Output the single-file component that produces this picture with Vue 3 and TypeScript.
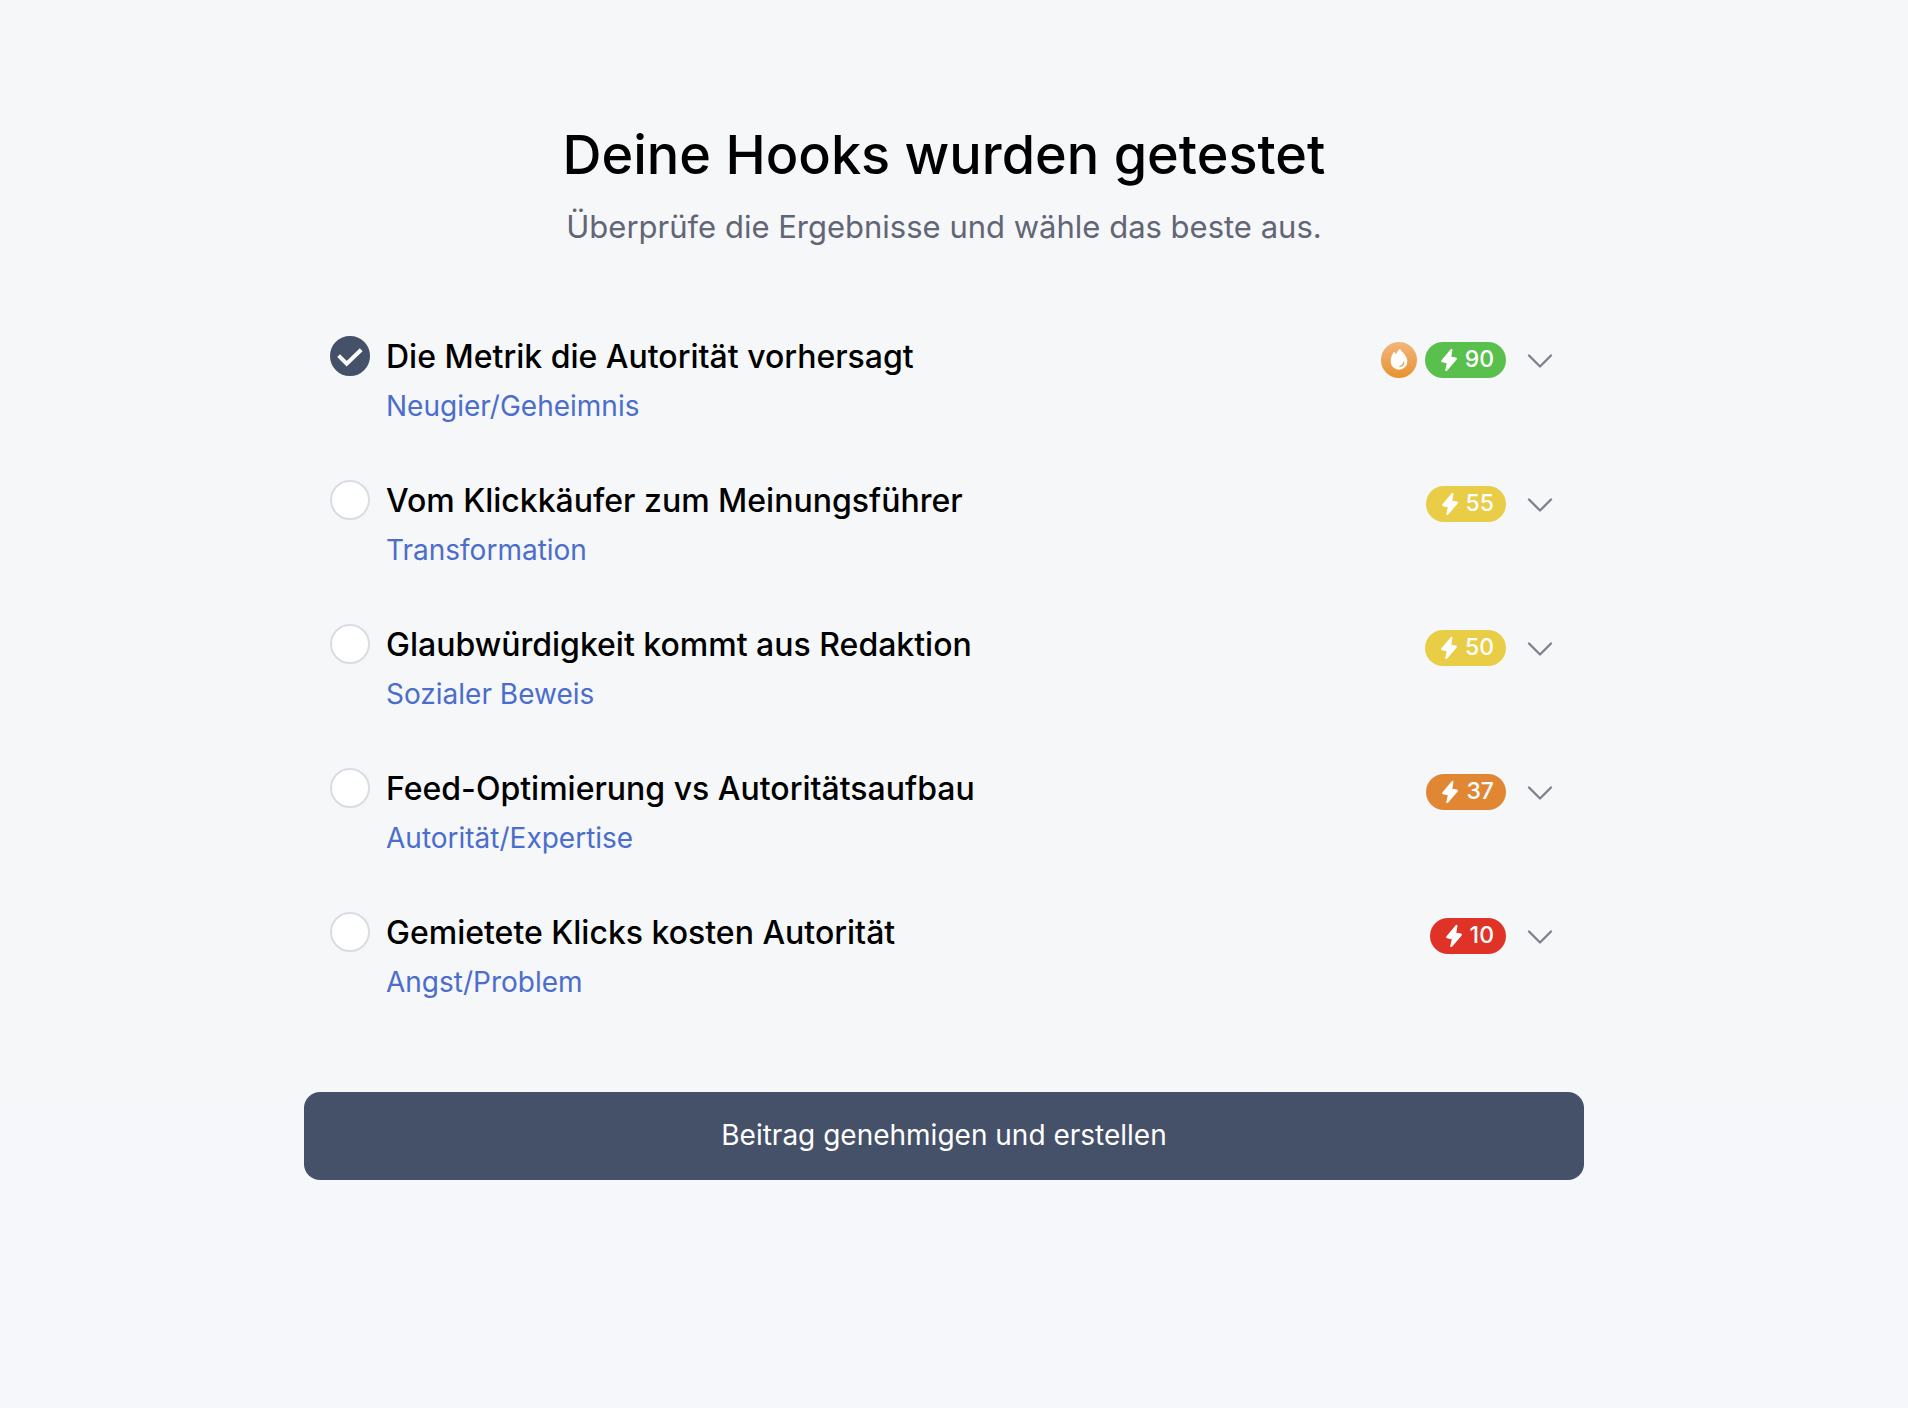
<script setup lang="ts">
import { ref } from 'vue'

interface Hook {
  id: number
  title: string
  category: string
  score: number
  top?: boolean
}

const hooks: Hook[] = [
  { id: 1, title: 'Die Metrik die Autorität vorhersagt', category: 'Neugier/Geheimnis', score: 90, top: true },
  { id: 2, title: 'Vom Klickkäufer zum Meinungsführer', category: 'Transformation', score: 55 },
  { id: 3, title: 'Glaubwürdigkeit kommt aus Redaktion', category: 'Sozialer Beweis', score: 50 },
  { id: 4, title: 'Feed-Optimierung vs Autoritätsaufbau', category: 'Autorität/Expertise', score: 37 },
  { id: 5, title: 'Gemietete Klicks kosten Autorität', category: 'Angst/Problem', score: 10 },
]

const selected = ref(1)

function level(score: number): string {
  if (score >= 75) return 'great'
  if (score >= 50) return 'medium'
  if (score >= 25) return 'low'
  return 'poor'
}
</script>

<template>
  <main class="page">
    <form class="content" @submit.prevent>
      <header class="intro">
        <h1>Deine Hooks wurden getestet</h1>
        <p>Überprüfe die Ergebnisse und wähle das beste aus.</p>
      </header>

      <ul class="hooks">
        <li v-for="hook in hooks" :key="hook.id" class="hook">
          <label class="choice">
            <span class="radio">
              <input v-model="selected" type="radio" name="hook" :value="hook.id" />
              <svg v-if="selected === hook.id" viewBox="0 0 40 40" aria-hidden="true">
                <path d="M8.6 19.6L16.7 27.6L31.2 13.8" />
              </svg>
            </span>
            <span class="text">
              <span class="title">{{ hook.title }}</span>
              <span class="category">{{ hook.category }}</span>
            </span>
          </label>

          <div class="result">
            <svg v-if="hook.top" class="flame" viewBox="0 0 36 36" aria-hidden="true">
              <defs>
                <linearGradient id="flame-fill" x1="0" y1="0" x2="0" y2="1">
                  <stop offset="0" stop-color="#f3b57e" />
                  <stop offset="1" stop-color="#e8922f" />
                </linearGradient>
              </defs>
              <circle cx="18" cy="18" r="18" fill="url(#flame-fill)" />
              <path
                fill="#fff"
                d="M19 6.8C20 9.4 22.6 11 24.2 13.2C25.6 15.2 26.3 17.2 26.3 19.4A8.3 8.4 0 0 1 9.7 19.4C9.7 15.8 11 12.8 13 9.8C14 10.6 14.6 11.4 15.1 12.4C15.8 10 17.2 8.4 19 6.8Z"
              />
              <path fill="#e99a44" d="M23.2 20C23.4 23 21.4 25 18.7 24.9C18 24.8 18 24.2 18.6 24C20.6 23.4 21.8 22.2 22.2 20.2C22.4 19.5 23.1 19.4 23.2 20Z" />
            </svg>
            <span class="score" :class="level(hook.score)">
              <svg viewBox="0 0 24 24" aria-hidden="true">
                <path
                  d="M13.7 1.2L4.3 12.6Q3.6 13.9 5 14.3L9.8 15.2L8.2 22.2Q8.8 23.6 10 22.8L19.7 11.4Q20.4 10 19 9.6L14.3 8.7L15.5 1.8Q15 .3 13.7 1.2Z"
                />
              </svg>
              <span class="value">{{ hook.score }}</span>
            </span>
            <button class="toggle" type="button" :aria-label="`Details: ${hook.title}`">
              <svg viewBox="0 0 32 32" aria-hidden="true">
                <path d="M5 11.5L16 22.5L27 11.5" />
              </svg>
            </button>
          </div>
        </li>
      </ul>

      <button class="submit" type="submit">Beitrag genehmigen und erstellen</button>
    </form>
  </main>
</template>

<style>
body {
  margin: 0;
  background: #f6f7fb;
}
</style>

<style scoped>
.page {
  box-sizing: border-box;
  min-height: 100vh;
  padding: 123px 20px 64px 0;
  background: linear-gradient(#f5f7f9 76%, #f6f7fb 84%);
  color: #000;
  font-family: Inter, "Liberation Sans", sans-serif;
}

.content {
  max-width: 1280px;
  margin: 0 auto;
}

.intro {
  text-align: center;
}

h1 {
  margin: 0;
  font-size: 54px;
  font-weight: 500;
  line-height: 64px;
}

.intro p {
  margin: 20px 0 0;
  color: #626575;
  font-size: 31px;
  line-height: 40px;
}

.hooks {
  display: flex;
  flex-direction: column;
  gap: 58px;
  margin: 89px 0 94px;
  padding: 0 28px 0 26px;
  list-style: none;
}

.hook {
  display: flex;
  justify-content: space-between;
  align-items: flex-start;
}

.choice {
  display: flex;
  gap: 16px;
  cursor: pointer;
}

.radio {
  display: grid;
  flex: none;
  width: 40px;
  height: 40px;
}

.radio > * {
  grid-area: 1 / 1;
}

.radio input {
  box-sizing: border-box;
  width: 40px;
  height: 40px;
  margin: 0;
  appearance: none;
  border: 2px solid #d9dce6;
  border-radius: 50%;
  background: #fff;
}

.radio input:checked {
  border-color: #455069;
  background: #455069;
}

.radio svg {
  pointer-events: none;
  fill: none;
  stroke: #fff;
  stroke-width: 4;
}

.text {
  display: flex;
  flex-direction: column;
  gap: 12px;
}

.title {
  font-size: 32px;
  font-weight: 500;
  line-height: 42px;
}

.category {
  color: #4b6dcb;
  font-size: 28px;
  line-height: 32px;
}

.result {
  display: flex;
  align-items: center;
  gap: 8px;
  padding-top: 6px;
}

.flame {
  width: 36px;
  height: 36px;
}

.score {
  display: flex;
  align-items: center;
  gap: 4px;
  height: 36px;
  padding: 0 12px;
  border-radius: 18px;
  color: #fff;
}

.score svg {
  width: 24px;
  height: 24px;
  fill: currentColor;
}

.value {
  padding-bottom: 2px;
  font-size: 23px;
  font-weight: 500;
  line-height: 32px;
}

.great {
  background: #59bf4d;
}

.medium {
  background: #eacd47;
}

.low {
  background: #e18633;
}

.poor {
  background: #df3328;
}

.toggle {
  display: flex;
  margin-left: 10px;
  padding: 0;
  border: 0;
  background: none;
  cursor: pointer;
}

.toggle svg {
  width: 32px;
  height: 32px;
  fill: none;
  stroke: #82838f;
  stroke-width: 2.4;
  stroke-linecap: round;
  stroke-linejoin: round;
}

.submit {
  width: 100%;
  padding: 25px 24px 27px;
  border: 0;
  border-radius: 16px;
  background: #455069;
  color: #fff;
  font: 400 28px / 36px Inter, "Liberation Sans", sans-serif;
  cursor: pointer;
}
</style>
